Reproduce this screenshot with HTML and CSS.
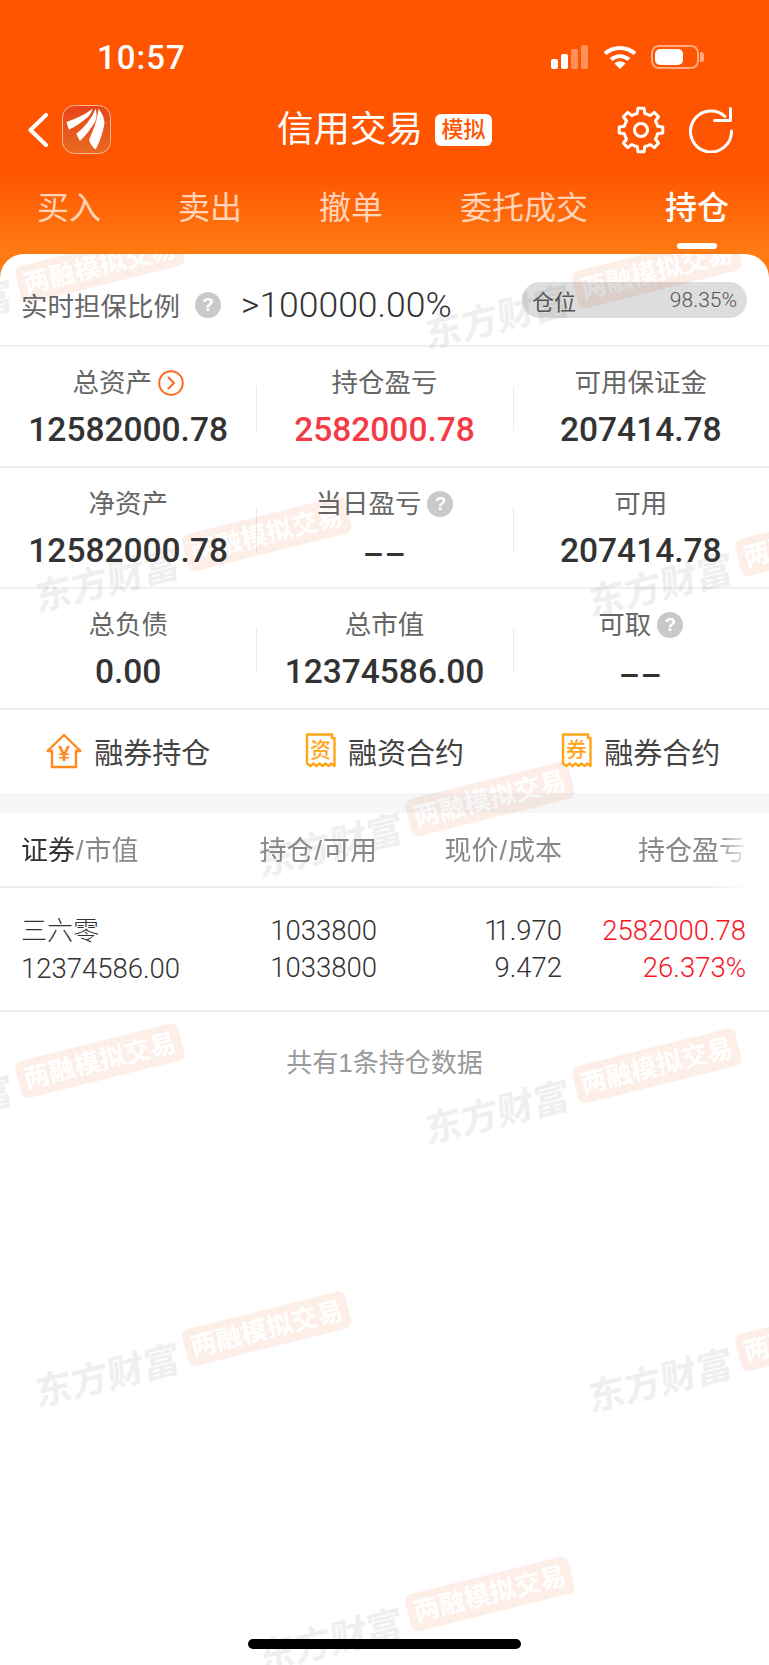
FILE: index.html
```html
<!DOCTYPE html>
<html lang="zh-CN">
<head>
  <meta charset="UTF-8" />
  <title>信用交易</title>
  <link rel="stylesheet" href="styles.css">
</head>
<body>
<div class="page">

  <!-- status bar -->
  <div class="status">
    <span class="time">10:57</span>
    <div class="status-icons">
      <div class="signal">
        <i class="bar b1"></i><i class="bar b2"></i><i class="bar b3"></i><i class="bar b4"></i>
      </div>
      <svg class="wifi" width="34" height="24" viewBox="0 0 34 24">
        <path d="M2 8.500C10.500 1 23.500 1 32 8.500" fill="none" stroke="#fff" stroke-width="4"/>
        <path d="M8 14.500C13.500 10 20.500 10 26 14.500" fill="none" stroke="#fff" stroke-width="4"/>
        <path d="M11.500 18.500C15 15.500 19 15.500 22.500 18.500L17 24Z" fill="#fff"/>
      </svg>
      <div class="battery"><i class="battery-fill"></i></div>
      <i class="battery-nub"></i>
    </div>
  </div>

  <!-- nav -->
  <div class="nav">
    <div class="nav-left">
      <svg width="20" height="34" viewBox="0 0 20 34">
        <path d="M18 2L2.500 17L18 32" fill="none" stroke="#fff" stroke-width="4" stroke-linecap="round" stroke-linejoin="round"/>
      </svg>
      <svg class="logo" width="49" height="49" viewBox="0 0 49 49">
        <defs>
          <linearGradient id="logoBg" x1="0" y1="0" x2="0" y2="1">
            <stop offset="0" stop-color="#e8431a"/>
            <stop offset="1" stop-color="#e86a20"/>
          </linearGradient>
        </defs>
        <rect x="0.500" y="0.500" width="48" height="48" rx="12" fill="url(#logoBg)" stroke="#f7b89a"/>
        <path d="M4.500 17C13 14 23 10 30.500 3.500C30 7 28 10 26 12C20 17 13 22 7 24.500C6 22 5 19.500 4.500 17Z" fill="#fff"/>
        <path d="M14.500 28.500C23 22 30 13 33.500 3.500C35 8 35 12 33.500 16C29 24 23 31 18 36C16.500 33.500 15 31 14.500 28.500Z" fill="#fff"/>
        <path d="M27 35C31.500 25 35.500 14 36.500 3.500C40 8 42.500 13 42.500 18C41 27 38 37 33.500 44.500C30.500 42 28 38.500 27 35Z" fill="#fff"/>
      </svg>
    </div>
    <div class="nav-title">
      <span class="title">信用交易</span>
      <span class="badge">模拟</span>
    </div>
    <div class="nav-right">
      <svg width="48" height="48" viewBox="0 0 48 48">
        <path d="M20.180 7.440L20.940 2.210H27.060L27.820 7.440A17 17 0 0 1 33.010 9.580L37.240 6.420L41.580 10.760L38.420 14.990A17 17 0 0 1 40.560 20.180L45.790 20.940V27.060L40.560 27.820A17 17 0 0 1 38.420 33.010L41.580 37.240L37.240 41.580L33.010 38.420A17 17 0 0 1 27.820 40.560L27.060 45.790H20.940L20.180 40.560A17 17 0 0 1 14.990 38.420L10.760 41.580L6.420 37.240L9.580 33.010A17 17 0 0 1 7.440 27.820L2.210 27.060V20.940L7.440 20.180A17 17 0 0 1 9.580 14.990L6.420 10.760L10.760 6.420L14.990 9.580A17 17 0 0 1 20.180 7.440Z" fill="none" stroke="#fff" stroke-width="3" stroke-linejoin="round"/>
        <circle cx="24" cy="24" r="6.500" fill="none" stroke="#fff" stroke-width="3"/>
      </svg>
      <svg width="45" height="46" viewBox="0 0 45 46">
        <path d="M36 9.500A20.500 20.500 0 1 0 42.500 24" fill="none" stroke="#fff" stroke-width="3" stroke-linecap="round"/>
        <path d="M41.500 1.500V13.500H25.500" fill="none" stroke="#fff" stroke-width="3" stroke-linecap="round" stroke-linejoin="round"/>
      </svg>
    </div>
  </div>

  <!-- tabs -->
  <div class="tabs">
    <div class="tab">买入</div>
    <div class="tab">卖出</div>
    <div class="tab">撤单</div>
    <div class="tab">委托成交</div>
    <div class="tab active">持仓</div>
  </div>

  <div class="card">
    <!-- watermark tiles -->
    <div class="wm-layer">
      <div class="wm wm-1"><span class="wm-name">东方财富</span><span class="wm-pill">两融模拟交易</span></div>
      <div class="wm wm-2"><span class="wm-name">东方财富</span><span class="wm-pill">两融模拟交易</span></div>
      <div class="wm wm-3"><span class="wm-name">东方财富</span><span class="wm-pill">两融模拟交易</span></div>
      <div class="wm wm-4"><span class="wm-name">东方财富</span><span class="wm-pill">两融模拟交易</span></div>
      <div class="wm wm-5"><span class="wm-name">东方财富</span><span class="wm-pill">两融模拟交易</span></div>
      <div class="wm wm-6"><span class="wm-name">东方财富</span><span class="wm-pill">两融模拟交易</span></div>
      <div class="wm wm-7"><span class="wm-name">东方财富</span><span class="wm-pill">两融模拟交易</span></div>
      <div class="wm wm-8"><span class="wm-name">东方财富</span><span class="wm-pill">两融模拟交易</span></div>
      <div class="wm wm-9"><span class="wm-name">东方财富</span><span class="wm-pill">两融模拟交易</span></div>
      <div class="wm wm-10"><span class="wm-name">东方财富</span><span class="wm-pill">两融模拟交易</span></div>
    </div>

    <div class="content">
      <div class="ratio-row">
        <span class="ratio-label">实时担保比例</span>
        <span class="help">?</span>
        <span class="ratio-value">&gt;100000.00%</span>
        <div class="position">
          <span class="position-label">仓位</span>
          <span class="position-value">98.35%</span>
        </div>
      </div>

      <div class="stats">
        <div class="stat">
          <div class="stat-label">总资产
            <svg class="stat-arrow" width="26" height="26" viewBox="0 0 26 26">
              <circle cx="13" cy="13" r="11.800" fill="none" stroke="#ff6a1a" stroke-width="2"/>
              <path d="M10.500 7.500L16 13L10.500 18.500" fill="none" stroke="#ff6a1a" stroke-width="2" stroke-linecap="round" stroke-linejoin="round"/>
            </svg>
          </div>
          <div class="stat-value">12582000.78</div>
        </div>
        <div class="stat">
          <div class="stat-label">持仓盈亏</div>
          <div class="stat-value red">2582000.78</div>
        </div>
        <div class="stat">
          <div class="stat-label">可用保证金</div>
          <div class="stat-value">207414.78</div>
        </div>
      </div>

      <div class="stats">
        <div class="stat">
          <div class="stat-label">净资产</div>
          <div class="stat-value">12582000.78</div>
        </div>
        <div class="stat">
          <div class="stat-label">当日盈亏<span class="help">?</span></div>
          <div class="stat-value"><span class="dash">--</span></div>
        </div>
        <div class="stat">
          <div class="stat-label">可用</div>
          <div class="stat-value">207414.78</div>
        </div>
      </div>

      <div class="stats">
        <div class="stat">
          <div class="stat-label">总负债</div>
          <div class="stat-value">0.00</div>
        </div>
        <div class="stat">
          <div class="stat-label">总市值</div>
          <div class="stat-value">12374586.00</div>
        </div>
        <div class="stat">
          <div class="stat-label">可取<span class="help">?</span></div>
          <div class="stat-value"><span class="dash">--</span></div>
        </div>
      </div>

      <div class="shortcuts">
        <div class="shortcut">
          <svg width="36" height="36" viewBox="0 0 36 36">
            <path d="M1.500 18L18 2L34.500 18H30V34H6V18Z" fill="none" stroke="#ff8a1e" stroke-width="2.400" stroke-linejoin="round"/>
            <text class="icon-yen" x="18" y="28" text-anchor="middle">¥</text>
          </svg>
          <span>融券持仓</span>
        </div>
        <div class="shortcut">
          <svg width="31" height="36" viewBox="0 0 31 36">
            <path d="M2 1.500H27V5H29.500V33L26.500 30.500L23.500 33L20.500 30.500L17.500 33L14.500 30.500L11.500 33L8.500 30.500L5.500 33L2 30.500Z" fill="none" stroke="#ffa516" stroke-width="2.400" stroke-linejoin="round"/>
            <text class="icon-char" x="15.500" y="24" text-anchor="middle">资</text>
          </svg>
          <span>融资合约</span>
        </div>
        <div class="shortcut">
          <svg width="31" height="36" viewBox="0 0 31 36">
            <path d="M2 1.500H27V5H29.500V33L26.500 30.500L23.500 33L20.500 30.500L17.500 33L14.500 30.500L11.500 33L8.500 30.500L5.500 33L2 30.500Z" fill="none" stroke="#ffa516" stroke-width="2.400" stroke-linejoin="round"/>
            <text class="icon-char" x="15.500" y="24" text-anchor="middle">券</text>
          </svg>
          <span>融券合约</span>
        </div>
      </div>

      <div class="band"></div>

      <div class="table-head">
        <div><span class="dark">证券</span><span class="slash">/</span>市值</div>
        <div class="num">持仓<span class="slash">/</span>可用</div>
        <div class="num">现价<span class="slash">/</span>成本</div>
        <div class="num">持仓盈亏</div>
      </div>

      <div class="table-row">
        <div><span class="stock-name">三六零</span><br>12374586.00</div>
        <div class="num">1033800<br>1033800</div>
        <div class="num"><span class="tight">1</span>1.970<br>9.472</div>
        <div class="num gain">2582000.78<br>26.373%</div>
      </div>

      <div class="table-foot">共有1条持仓数据</div>
    </div>

    <div class="home-bar"></div>
  </div>
</div>
</body>
</html>
```

FILE: styles.css
```css
* { box-sizing: border-box; }
body {
  margin: 0;
  font-family: "Liberation Sans", "Noto Sans CJK SC", sans-serif;
  color: #333;
  background: #fff;
}
.page {
  width: 769px; height: 1665px; overflow: hidden;
  background: linear-gradient(#ff5500 0, #ff5500 170px, #ff7b12 254px, #ff7b12 290px) no-repeat;
  background-size: 100% 290px;
}

/* status bar */
.status {
  height: 105px; padding: 41px 65px 0 97px;
  display: flex; justify-content: space-between; align-items: flex-start;
}
.time {
  font: 500 33px/33px Roboto, sans-serif; color: #fff; letter-spacing: 1px;
}
.status-icons { display: flex; align-items: center; margin-top: 4px; height: 24px; }
.signal { display: flex; align-items: flex-end; gap: 3px; height: 24px; width: 38px; margin-right: 14px; }
.bar { display: block; width: 7px; border-radius: 2px; background: #fff; }
.b1 { height: 10px; }
.b2 { height: 15px; }
.b3 { height: 20px; background: rgba(255,255,255,.35); }
.b4 { height: 24px; background: rgba(255,255,255,.35); }
.wifi { margin-right: 14px; }
.battery {
  width: 48px; height: 24px; padding: 2px;
  border: 2px solid rgba(255,255,255,.5); border-radius: 8px;
}
.battery-fill { display: block; width: 28px; height: 16px; background: #fff; border-radius: 5px; }
.battery-nub {
  display: block; width: 4px; height: 10px; margin-left: 1px;
  background: rgba(255,255,255,.5); border-radius: 0 3px 3px 0;
}

/* nav */
.nav {
  height: 48px;
  display: grid; grid-template-columns: 1fr auto 1fr; align-items: center;
}
.nav-left { display: flex; align-items: center; gap: 14px; padding-left: 28px; }
.logo { display: block; }
.nav-title { display: flex; align-items: center; gap: 12px; }
.title { font-size: 36.500px; line-height: 48px; color: #fff; }
.badge {
  width: 57px; height: 32px; border-radius: 6px; background: #fff;
  color: #ff5500; font-size: 22px; line-height: 32px; text-align: center; font-weight: 500;
}
.nav-right { display: flex; align-items: center; justify-content: flex-end; gap: 24px; padding-right: 35px; }

/* tabs */
.tabs { height: 101px; padding: 35px 0 0 37px; display: flex; gap: 77px; }
.tab {
  font-size: 32px; line-height: 40px; color: rgba(255,255,255,.72);
  display: flex; flex-direction: column; align-items: center;
}
.tab.active { color: #fff; font-weight: 500; }
.tab.active::after {
  content: ""; display: block; width: 40px; height: 6px; margin-top: 15px;
  background: #fff; border-radius: 3px;
}

/* card */
.card {
  position: relative; height: 1411px; overflow: hidden;
  background: #fff; border-radius: 24px 24px 0 0;
}
.content { position: relative; z-index: 1; }

/* watermark */
.wm-layer { position: absolute; inset: 0; }
.wm {
  position: absolute; width: 318px; height: 40px;
  display: flex; align-items: center; gap: 6px;
  transform: rotate(-14deg); white-space: nowrap;
}
.wm-name {
  flex: none; width: 150px; margin-left: -6px;
  font-size: 37px; line-height: 40px; font-weight: 700; color: #efefef;
  transform: translateY(8px) skewX(-8deg);
}
.wm-pill {
  flex: none; width: 168px; height: 38px; border-radius: 7px; background: #fdeee7;
  color: #fff; font-size: 26px; line-height: 38px; font-weight: 700; text-align: center;
}
.wm-1 { left: -132px; top: 10px; }
.wm-2 { left: 425px; top: 15px; }
.wm-3 { left: 35px; top: 278px; }
.wm-4 { left: 588px; top: 283px; }
.wm-5 { left: 258px; top: 543px; }
.wm-6 { left: -132px; top: 805px; }
.wm-7 { left: 425px; top: 810px; }
.wm-8 { left: 35px; top: 1073px; }
.wm-9 { left: 588px; top: 1078px; }
.wm-10 { left: 258px; top: 1338px; }

/* ratio row */
.ratio-row {
  height: 93px; padding: 10px 22px 0 21px;
  display: flex; align-items: center;
  border-bottom: 2px solid rgba(0,0,0,.06);
}
.ratio-label { font-size: 26.500px; color: #666; }
.help {
  flex: none; width: 26px; height: 26px; border-radius: 50%;
  background: #c9c9c9; color: #fff;
  font: 700 19px/26px "Liberation Sans", sans-serif; text-align: center;
}
.ratio-label + .help { margin-left: 15px; }
.ratio-value { margin-left: 20px; font: 300 35.500px/40px Roboto, sans-serif; color: #333; }
.position {
  margin-left: auto; margin-bottom: 10px;
  width: 225px; height: 36px; padding: 0 10px 0 10px; border-radius: 18px;
  background: rgba(0,0,0,.135);
  display: flex; justify-content: space-between; align-items: center;
}
.position-label { font-size: 22px; color: #555; }
.position-value { font: 300 21px/36px Roboto, sans-serif; color: #555; }

/* stats */
.stats {
  height: 121px; display: flex;
  border-bottom: 2px solid rgba(0,0,0,.06);
}
.stat { flex: 1; padding-top: 16px; text-align: center; position: relative; }
.stat + .stat::before {
  content: ""; position: absolute; left: 0; top: 39px; width: 1px; height: 45px;
  background: rgba(0,0,0,.08);
}
.stat-label {
  display: flex; justify-content: center; align-items: center; gap: 6px;
  height: 40px; font-size: 26.500px; line-height: 40px; color: #666;
}
.stat-arrow { display: block; }
.stat-value { margin-top: 7px; height: 40px; font: 500 33.500px/40px Roboto, sans-serif; color: #333; }
.stat-value.red { color: #f43a47; }
.dash { display: inline-block; transform: translateY(3px) scaleX(1.9); }

/* shortcuts */
.shortcuts { height: 83px; display: flex; }
.shortcut {
  flex: 1; display: flex; justify-content: center; align-items: center; gap: 12px;
  padding-bottom: 2px; font-size: 29px; color: #444;
}
.shortcut svg { display: block; }
.icon-yen { font: 700 22px "Liberation Sans", sans-serif; fill: #ff8a1e; }
.icon-char { font: 500 21px "Noto Sans CJK SC", sans-serif; fill: #ffa516; }
.band { height: 20px; background: rgba(0,30,60,.04); }

/* table */
.table-head, .table-row {
  display: grid; grid-template-columns: 219px 137px 185px 184px; padding: 0 22px 0 21px;
}
.table-head {
  height: 75px; padding-bottom: 3px; align-items: center;
  font-size: 27px; color: #888;
  border-bottom: 2px solid rgba(0,0,0,.06);
  -webkit-mask-image: linear-gradient(to right, #000 715px, transparent 750px);
  mask-image: linear-gradient(to right, #000 715px, transparent 750px);
}
.dark { color: #333; }
.slash { margin: 0 1px; }
.num { text-align: right; }
.table-row {
  height: 124px; padding-top: 24px; font: 300 27.500px/37px Roboto, "Noto Sans CJK SC", sans-serif; color: #333;
  border-bottom: 2px solid rgba(0,0,0,.06);
}
.stock-name { font-size: 26px; }
.tight { letter-spacing: -5px; }
.gain { color: #f8141f; white-space: nowrap; }
.table-foot { margin-top: 31px; text-align: center; font-size: 26px; line-height: 40px; color: #999; }

.home-bar {
  position: absolute; z-index: 2; left: 248px; bottom: 16px;
  width: 273px; height: 10px; border-radius: 5px; background: #000;
}
```
